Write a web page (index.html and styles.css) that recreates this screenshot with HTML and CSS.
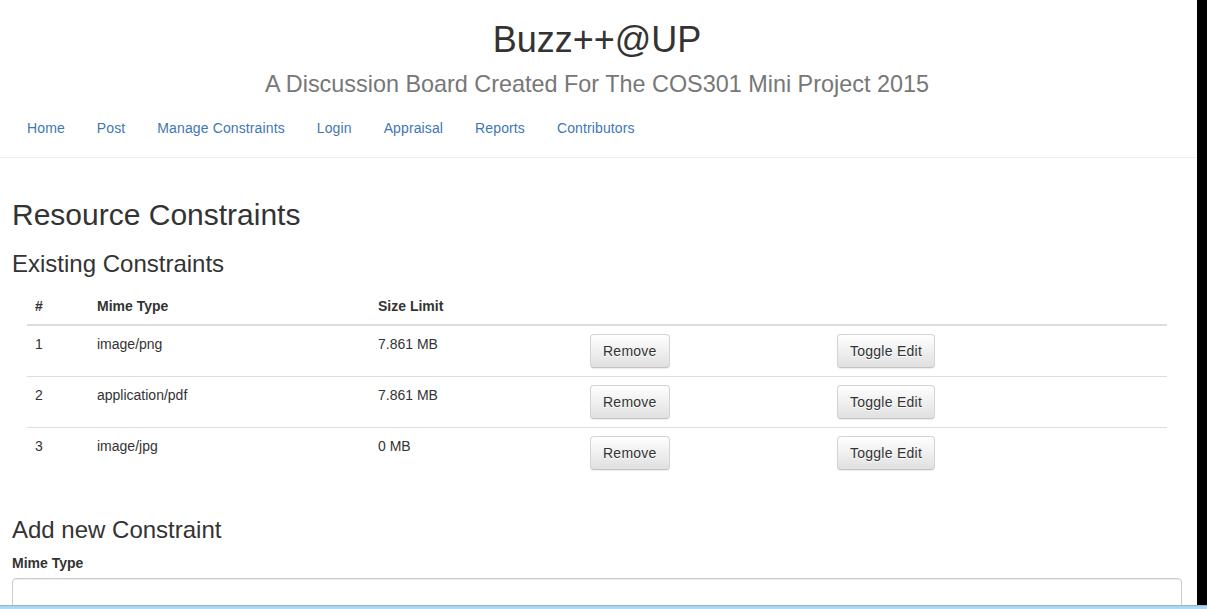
FILE: index.html
```html
<!DOCTYPE html>
<html lang="en">
<head>
<meta charset="utf-8">
<title>Buzz++@UP</title>
<link rel="stylesheet" href="styles.css">
</head>
<body>
<div class="screen">
  <div class="page">
    <header class="masthead">
      <h1 class="site-title">Buzz++@UP<br><small>A Discussion Board Created For The COS301 Mini Project 2015</small></h1>
      <ul class="nav">
        <li><a href="#">Home</a></li>
        <li><a href="#">Post</a></li>
        <li><a href="#">Manage Constraints</a></li>
        <li><a href="#">Login</a></li>
        <li><a href="#">Appraisal</a></li>
        <li><a href="#">Reports</a></li>
        <li><a href="#">Contributors</a></li>
      </ul>
    </header>
    <main class="content">
      <h2 class="page-title">Resource Constraints</h2>
      <h3 class="section-title">Existing Constraints</h3>
      <div class="table-wrap">
        <table class="table">
          <colgroup>
            <col class="c-num"><col class="c-mime"><col class="c-size"><col class="c-remove"><col class="c-edit">
          </colgroup>
          <thead>
            <tr><th>#</th><th>Mime Type</th><th>Size Limit</th><th></th><th></th></tr>
          </thead>
          <tbody>
            <tr><td>1</td><td>image/png</td><td>7.861 MB</td><td><button class="btn">Remove</button></td><td><button class="btn">Toggle Edit</button></td></tr>
            <tr><td>2</td><td>application/pdf</td><td>7.861 MB</td><td><button class="btn">Remove</button></td><td><button class="btn">Toggle Edit</button></td></tr>
            <tr><td>3</td><td>image/jpg</td><td>0 MB</td><td><button class="btn">Remove</button></td><td><button class="btn">Toggle Edit</button></td></tr>
          </tbody>
        </table>
      </div>
      <h3 class="section-title">Add new Constraint</h3>
      <div class="form-group">
        <label class="field-label" for="mime">Mime Type</label>
        <input class="form-control" id="mime" type="text">
      </div>
    </main>
  </div>
  <div class="scrollbar"></div>
</div>
<div class="taskbar"></div>
</body>
</html>
```
FILE: styles.css
```css
* { box-sizing: border-box; }
html, body { margin: 0; padding: 0; }
body {
  font-family: "Liberation Sans", Arial, sans-serif;
  font-size: 14px;
  line-height: 1.42857143;
  color: #333;
  background: #fff;
  height: 609px;
  overflow: hidden;
}
.screen {
  display: flex;
  height: 605px;
  overflow: hidden;
}
.page {
  flex: 1;
  min-width: 0;
  background: #fff;
}
.scrollbar {
  width: 10px;
  flex: none;
  background: #000;
}
.taskbar {
  height: 4px;
  background: linear-gradient(to bottom, #9fb3c3 0, #9fb3c3 1px, #a5d3f1 1px, #b0dbf6 4px);
}
.masthead {
  padding: 0 15px 8px 12px;
  border-bottom: 1px solid #eee;
}
.site-title {
  margin: 20px 0 10px;
  font-size: 36px;
  font-weight: 500;
  line-height: 1.1;
  text-align: center;
  color: #333;
}
.site-title small {
  font-size: 65%;
  font-weight: 400;
  color: #777;
}
.nav {
  list-style: none;
  margin: 0;
  padding: 0;
  display: flex;
  gap: 2px;
}
.nav a {
  display: block;
  padding: 9px 15px 11px;
  color: #3f77b3;
  text-decoration: none;
  letter-spacing: 0.12px;
}
.content {
  padding: 20px 15px 0 12px;
}
.page-title {
  margin: 20px 0 10px;
  font-size: 30px;
  font-weight: 500;
  line-height: 1.1;
}
.section-title {
  margin: 20px 0 10px;
  font-size: 24px;
  font-weight: 500;
  line-height: 1.1;
}
.table-wrap {
  padding: 0 15px 19px;
}
.table {
  width: 100%;
  border-collapse: collapse;
  border-spacing: 0;
  margin: 0;
}
.c-num { width: 62px; }
.c-mime { width: 281px; }
.c-size { width: 212px; }
.c-remove { width: 247px; }
.c-edit { width: 338px; }
.table th {
  text-align: left;
  font-weight: bold;
  padding: 8px;
  line-height: 20px;
  vertical-align: bottom;
  border-bottom: 2px solid #ddd;
}
.table td {
  padding: 8px;
  line-height: 20px;
  vertical-align: top;
  border-top: 1px solid #ddd;
}
.btn {
  display: inline-block;
  margin: 0;
  padding: 6px 12px;
  font-family: inherit;
  font-size: 14px;
  line-height: 20px;
  letter-spacing: 0.25px;
  color: #333;
  text-shadow: 0 1px 0 #fff;
  background-color: #fff;
  background-image: linear-gradient(to bottom, #fff 0, #e0e0e0 100%);
  border: 1px solid #ccc;
  border-color: #d4d4d4 #d4d4d4 #c4c4c4;
  border-radius: 4px;
  box-shadow: inset 0 1px 0 rgba(255,255,255,.15), 0 1px 1px rgba(0,0,0,.075);
  cursor: pointer;
}
.field-label {
  display: inline-block;
  margin-bottom: 5px;
  font-weight: bold;
}
.form-control {
  display: block;
  width: 100%;
  height: 34px;
  padding: 6px 12px;
  font-family: inherit;
  font-size: 14px;
  color: #555;
  background: #fff;
  border: 1px solid #ccc;
  border-radius: 4px;
  box-shadow: inset 0 1px 1px rgba(0,0,0,.075);
}
```
